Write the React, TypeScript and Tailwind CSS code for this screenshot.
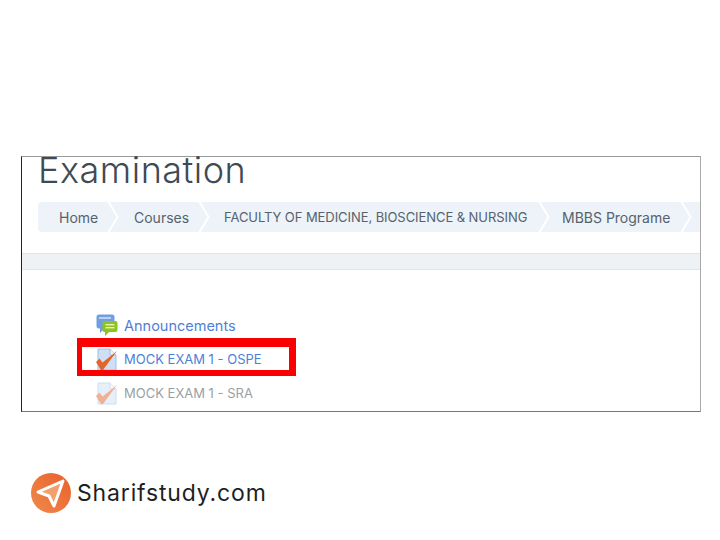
const crumbs = [
  { label: "Home", width: "w-[74px]", text: "pl-[21px] text-[14px]" },
  { label: "Courses", width: "w-[91px]", text: "pl-[22px] text-[14px]" },
  { label: "FACULTY OF MEDICINE, BIOSCIENCE & NURSING", width: "w-[340px]", text: "pl-[21px] text-[13px] tracking-[-0.07px] leading-[15px] pt-px" },
  { label: "MBBS Programe", width: "w-[142px]", text: "pl-[19px] text-[14px]" },
]

function Chevron() {
  return (
    <svg className="absolute -right-[9px] top-0 z-10" width="14" height="30" viewBox="0 0 14 30">
      <path d="M1 0 L10 15 L1 30 H0 V0 Z" fill="#edf3f8" />
      <path d="M1 -1 L10.5 15 L1 31" fill="none" stroke="#ffffff" strokeWidth="2" />
    </svg>
  )
}

function ForumIcon() {
  return (
    <svg width="22" height="23" viewBox="0 0 22 23">
      <rect x="0.5" y="0.5" width="18" height="14" rx="2.5" fill="#6f9fe2" />
      <path d="M4 14 V19 L9 14 Z" fill="#6f9fe2" />
      <rect x="3" y="3" width="12" height="2" fill="#b9d2f3" />
      <rect x="6.5" y="7" width="15" height="11" rx="2" fill="#8fc31f" />
      <path d="M9 17 V22 L14 17 Z" fill="#8fc31f" />
      <rect x="9.5" y="10" width="9" height="1.4" fill="#e4f3b8" />
      <rect x="9.5" y="13" width="9" height="1.4" fill="#e4f3b8" />
    </svg>
  )
}

function QuizIcon({ dim }: { dim?: boolean }) {
  return (
    <svg width="22" height="23" viewBox="0 0 22 23" className={dim ? "opacity-50" : ""}>
      <path d="M2 1 H14 L20 7 V22 H2 Z" fill="#cfe0f6" stroke="#9dbfea" strokeWidth="1" />
      <path d="M14 1 V7 H20" fill="#eef4fc" stroke="#9dbfea" strokeWidth="1" />
      <path d="M0 14 L3.5 10.5 L6.5 14.5 L21 3 L7 22 H5 Z" fill="#e0662a" />
    </svg>
  )
}

export default function App() {
  return (
    <div className="relative h-[540px] w-[720px] overflow-hidden bg-white pt-[156px] font-['Inter',sans-serif]">
      <div className="relative ml-[21px] h-[256px] w-[680px] border border-t-[#9a9a9a] border-r-[#a8a8a8] border-b-[#777777] border-l-[#222222]">
        <h1 className="ml-[16px] text-[36px] leading-[26px] font-light tracking-[0.5px] text-[#3f4a55]">Examination</h1>

        <div className="mt-[19px] ml-[16px] flex h-[30px] rounded-l-[4px] bg-[#edf3f8]">
          {crumbs.map((c) => (
            <div key={c.label} className={`relative flex h-full shrink-0 items-center ${c.width}`}>
              <span className={`whitespace-nowrap text-[#56626e] ${c.text}`}>{c.label}</span>
              <Chevron />
            </div>
          ))}
        </div>

        <div className="mt-[21px] h-[17px] border-y border-[#dfe5e9] bg-[#eef2f5]" />

        <div className="mt-[44px] ml-[74px] flex flex-col gap-[11px]">
          <div className="flex h-[23px] items-center gap-[6px]">
            <ForumIcon />
            <span className="text-[14.5px] text-[#4f7fd6]">Announcements</span>
          </div>
          <div className="flex h-[23px] items-center gap-[6px]">
            <QuizIcon />
            <span className="text-[13px] text-[#4f7fd6]">MOCK EXAM 1 - OSPE</span>
          </div>
          <div className="flex h-[23px] items-center gap-[6px]">
            <QuizIcon dim />
            <span className="text-[13px] text-[#9a9fa5]">MOCK EXAM 1 - SRA</span>
          </div>
        </div>

        <div className="absolute top-[181px] left-[55px] h-[38px] w-[219px] border-t-[9px] border-r-[7px] border-b-[6px] border-l-[5px] border-[#fb0000]" />
      </div>

      <div className="mt-[61px] ml-[31px] flex items-center gap-[6px]">
        <svg width="40" height="40" viewBox="0 0 40 40">
          <defs>
            <linearGradient id="logoFill" x1="0" y1="1" x2="1" y2="0">
              <stop offset="0" stopColor="#f08a4b" />
              <stop offset="1" stopColor="#e8602c" />
            </linearGradient>
          </defs>
          <circle cx="20" cy="20" r="20" fill="url(#logoFill)" />
          <path d="M7 19 L32 8 L23 33 L18 23 Z" fill="#f4a06c" stroke="#ffffff" strokeWidth="3" strokeLinejoin="round" />
        </svg>
        <span className="text-[23px] leading-none tracking-[0.85px] text-[#1f1f1f]">Sharifstudy.com</span>
      </div>
    </div>
  )
}
